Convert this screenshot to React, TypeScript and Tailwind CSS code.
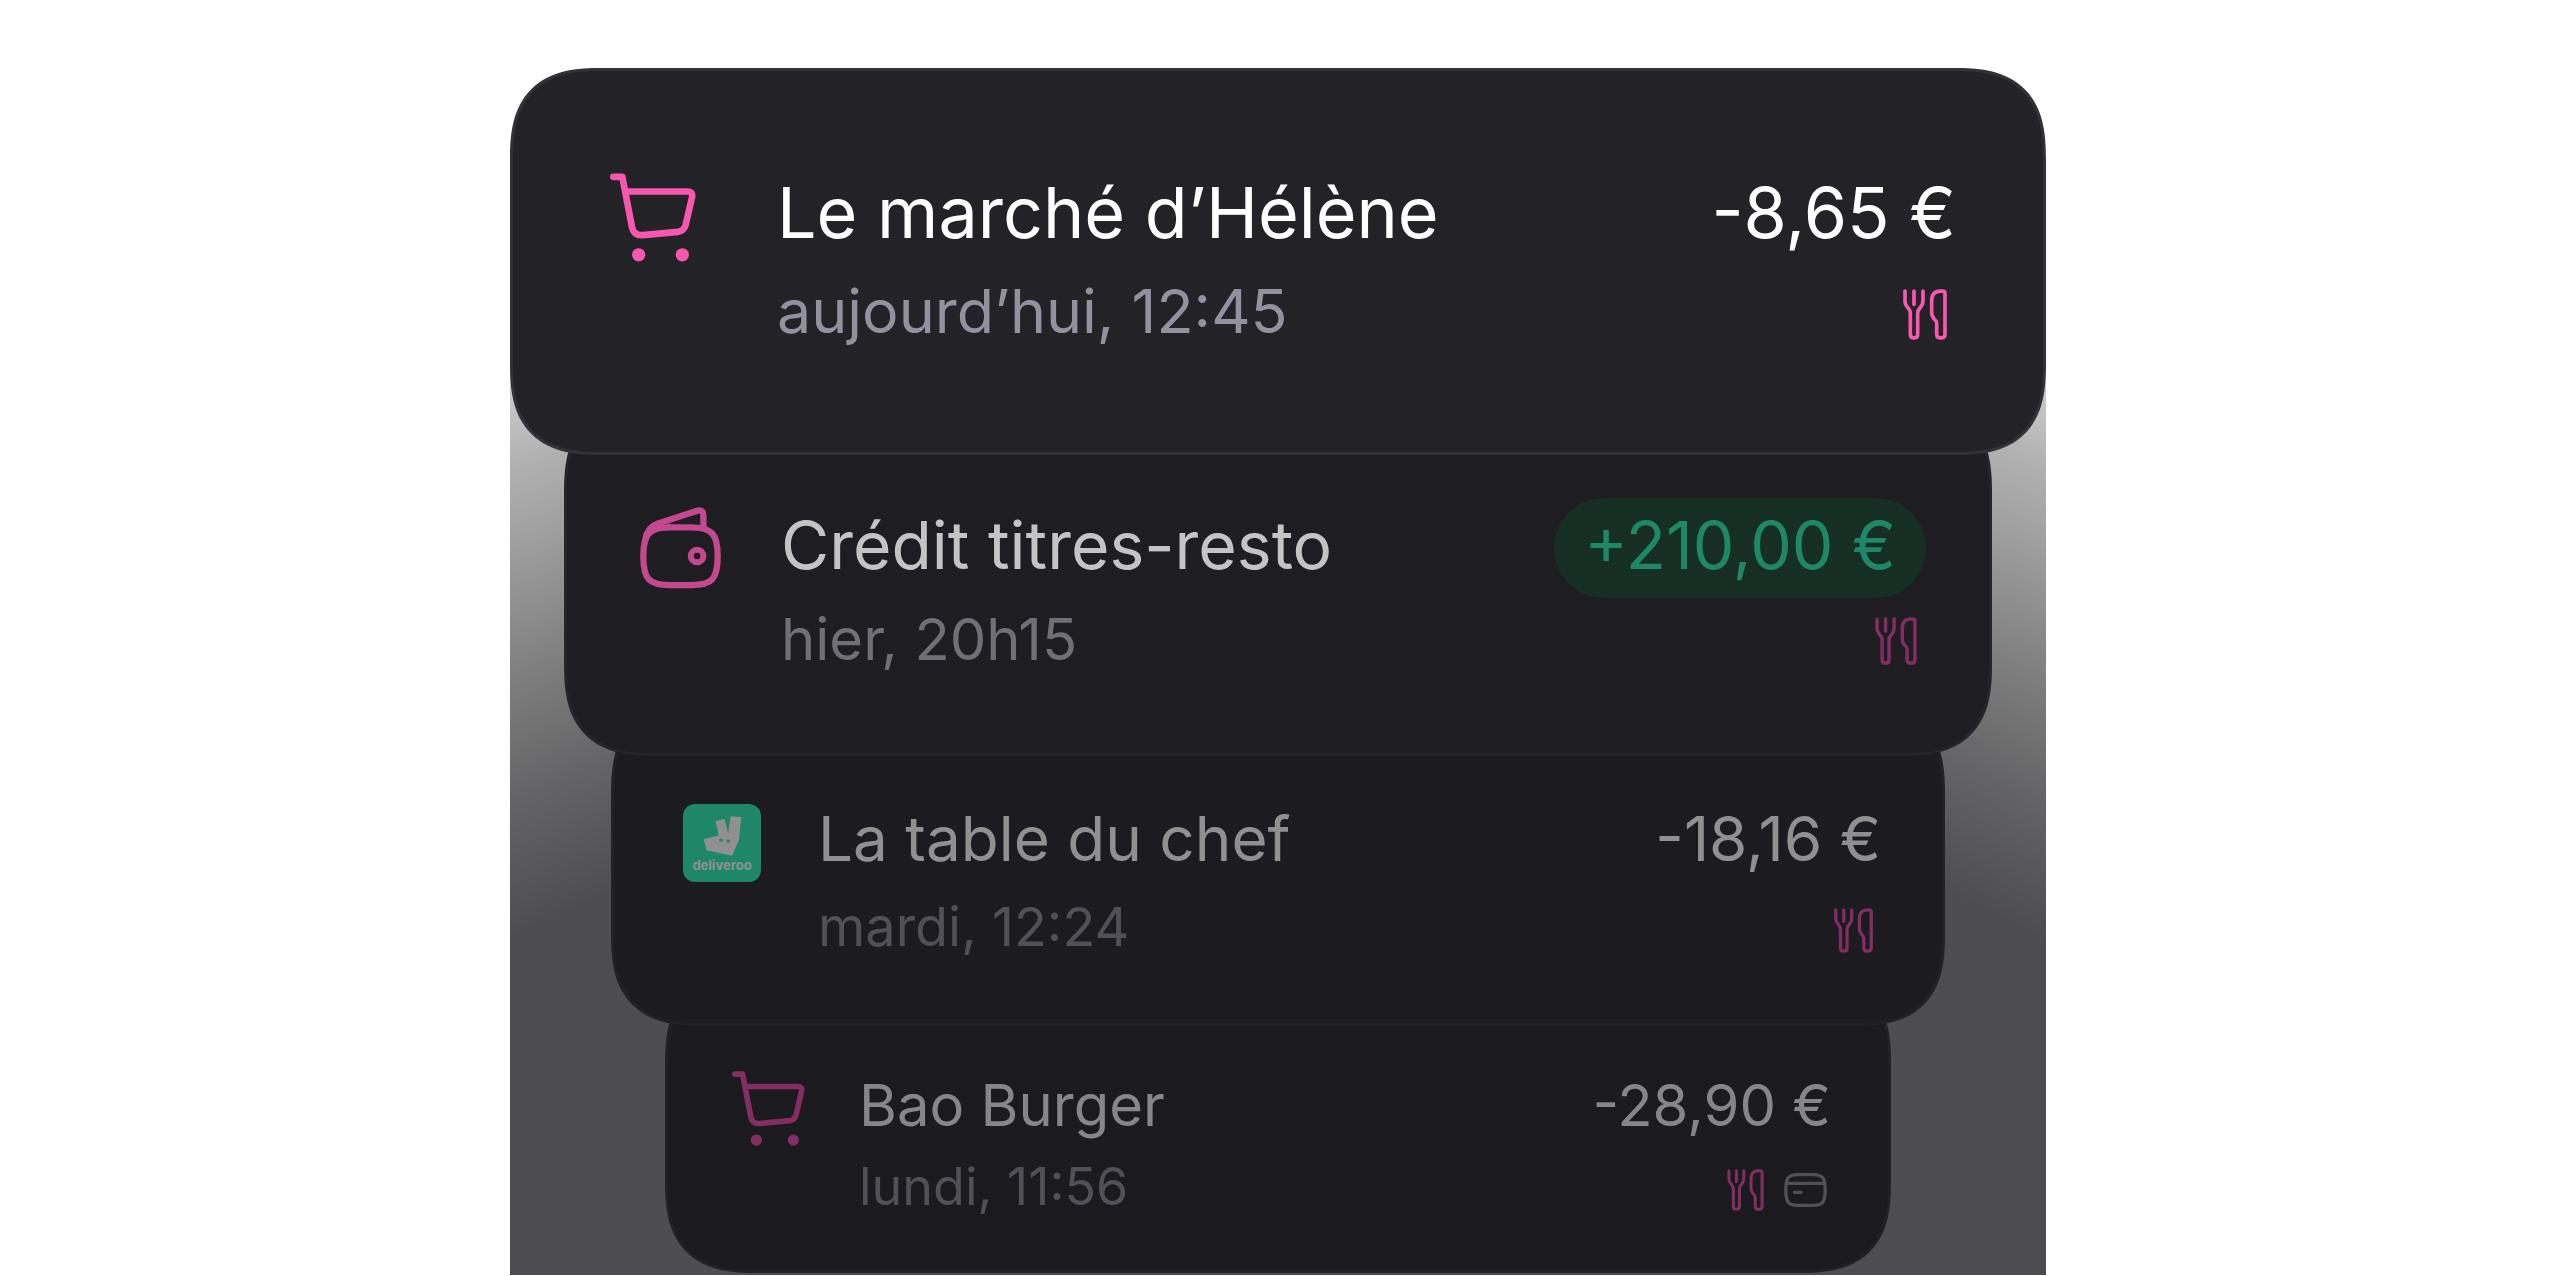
import type { ReactNode } from "react";
import clsx from "clsx";

function CartIcon({ className }: { className?: string }) {
  return (
    <svg viewBox="60 70 258 266" fill="none" stroke="currentColor" strokeWidth="20" strokeLinecap="round" strokeLinejoin="round" className={className} aria-hidden="true">
      <path d="M70 81H97L126 232Q131 258 158 256L264 246Q282 243 287 225L306 143Q310 125 292 125H108" />
      <circle cx="146" cy="315" r="20" fill="currentColor" stroke="none" />
      <circle cx="277" cy="315" r="20" fill="currentColor" stroke="none" />
    </svg>
  );
}

function WalletIcon({ className }: { className?: string }) {
  return (
    <svg viewBox="60 52 244 246" fill="none" stroke="currentColor" strokeWidth="19" strokeLinecap="round" strokeLinejoin="round" className={className} aria-hidden="true">
      <path d="M150 113H215C278 113 294 134 294 200C294 268 278 287 215 287H150C86 287 70 268 70 200C70 134 86 113 150 113Z" />
      <path d="M76 150C80 122 92 109 112 102L235 62Q250 59 251 76V114" />
      <path d="M90 122L150 104V112Z" fill="currentColor" strokeWidth="6" />
      <circle cx="232" cy="199" r="19" strokeWidth="18" />
    </svg>
  );
}

function CutleryIcon({ className }: { className?: string }) {
  return (
    <svg viewBox="69 57 132 152" fill="none" stroke="currentColor" strokeWidth="11" strokeLinecap="round" strokeLinejoin="round" className={className} aria-hidden="true">
      <path d="M75 63V92Q75 104 84 113Q91 120 91 130V192Q91 203 102 203Q113 203 113 192V130Q113 120 120 113Q129 104 129 92V63" />
      <path d="M102 63V102" />
      <path d="M195 70V192Q195 203 183 203Q170 203 170 192V158Q170 152 163 147Q155 139 155 128V92Q155 63 182 63H188Q195 63 195 70Z" />
    </svg>
  );
}

function CardIcon({ className }: { className?: string }) {
  return (
    <svg viewBox="253 69 128 102" fill="none" stroke="currentColor" strokeWidth="10" strokeLinecap="round" className={className} aria-hidden="true">
      <path d="M294 74H340C369 74 376 84 376 120C376 156 369 166 340 166H294C265 166 258 156 258 120C258 84 265 74 294 74Z" />
      <path d="M260 100H374M284 127H304" />
    </svg>
  );
}

function DeliverooLogo() {
  return (
    <div className="flex size-[78px] flex-col items-center rounded-xl bg-[#1e8767] pt-3 text-[#909090]">
      <svg viewBox="98 77 117 123" className="h-10 w-[39px]" fill="currentColor" aria-hidden="true">
        <path d="M135 92L163 86L174 130L181 78L214 80L207 151L186 199L107 182L99 148L145 137Z" />
        <ellipse cx="152" cy="151" rx="6" ry="5" fill="#1e8767" />
        <ellipse cx="174" cy="154" rx="6" ry="5" fill="#1e8767" />
      </svg>
      <span className="text-[13px] leading-[18px] font-bold">deliveroo</span>
    </div>
  );
}

type TransactionProps = {
  className: string;
  icon: ReactNode;
  title: string;
  date: string;
  amount: ReactNode;
  tags: ReactNode;
  textClassName: string;
  titleClassName: string;
  dateClassName: string;
  tagsClassName: string;
};

function Transaction(props: TransactionProps) {
  return (
    <li className={clsx("relative flex items-start rounded-[92px] border-[3px] [corner-shape:superellipse(1.4)]", props.className)}>
      {props.icon}
      <div className={clsx("min-w-0 flex-1 whitespace-nowrap", props.textClassName)}>
        <h2 className={props.titleClassName}>{props.title}</h2>
        <p className={props.dateClassName}>{props.date}</p>
      </div>
      <div className="flex shrink-0 flex-col items-end whitespace-nowrap">
        <p className={props.titleClassName}>{props.amount}</p>
        <div className={clsx("flex items-center", props.tagsClassName)}>{props.tags}</div>
      </div>
    </li>
  );
}

export default function App() {
  return (
    <main className="min-h-screen bg-white pt-[68px] font-[Inter,'Liberation_Sans',sans-serif]">
      <ul className="mx-auto w-full max-w-[1536px] rounded-t-[120px] bg-[radial-gradient(circle_at_50%_2432px,#4d4d4f_1738px,#646466_1865px,#828282_1990px,#a2a2a2_2110px,#b0b0b0_2170px,#c8c8c8_2240px)] pb-0.5">
        <Transaction
          className="z-40 border-[#323137] bg-[#232227] pt-[93px] pr-[87px] pb-[92px] pl-[97px]"
          icon={<CartIcon className="mt-[9px] h-[89px] w-[86px] text-[#f857b0]" />}
          title="Le marché d’Hélène"
          date="aujourd’hui, 12:45"
          amount="-8,65 €"
          tags={<CutleryIcon className="h-[51px] w-11 text-[#f857b0]" />}
          textClassName="ml-[81px]"
          titleClassName="text-[70px] leading-[98px] text-white"
          dateClassName="text-[61px] leading-[98px] text-[#9390a0]"
          tagsClassName="mt-[27px] mr-[9px]"
        />
        <Transaction
          className="z-30 mx-[54px] -mt-[54px] border-[#252428] bg-[#1e1d21] pt-[94px] pr-[63px] pb-[67px] pl-[73px]"
          icon={<WalletIcon className="mt-[9px] h-[82px] w-[81px] text-[#c3488d]" />}
          title="Crédit titres-resto"
          date="hier, 20h15"
          amount={<span className="block h-[100px] rounded-full bg-[#172e25] px-[30px] text-[#1e8767]">+210,00 €</span>}
          tags={<CutleryIcon className="h-12 w-[42px] text-[#832e62]" />}
          textClassName="ml-[60px]"
          titleClassName="text-[66px] leading-[94px] text-[#c4c4c4]"
          dateClassName="text-[58px] leading-[94px] text-[#706f78]"
          tagsClassName="mt-[19px] mr-[9px]"
        />
        <Transaction
          className="z-20 mx-[101px] -mt-[54px] border-[#222125] bg-[#1c1b1f] pt-[90px] pr-[61px] pb-[52px] pl-[69px]"
          icon={<div className="mt-[9px]"><DeliverooLogo /></div>}
          title="La table du chef"
          date="mardi, 12:24"
          amount="-18,16 €"
          tags={<CutleryIcon className="h-[45px] w-[39px] text-[#832e62]" />}
          textClassName="ml-[57px]"
          titleClassName="text-[62px] leading-[88px] text-[#909090]"
          dateClassName="text-[54px] leading-[88px] text-[#515058]"
          tagsClassName="mt-[25px] mr-2"
        />
        <Transaction
          className="z-10 mx-[155px] -mt-[54px] border-[#212024] bg-[#1b1a1e] pt-[89px] pr-[57px] pb-[42px] pl-16"
          icon={<CartIcon className="mt-[7px] h-[75px] w-[73px] text-[#832e62]" />}
          title="Bao Burger"
          date="lundi, 11:56"
          amount="-28,90 €"
          tags={
            <>
              <CutleryIcon className="h-[42px] w-[37px] text-[#832e62]" />
              <CardIcon className="h-[34px] w-[43px] text-[#515058]" />
            </>
          }
          textClassName="ml-[54px]"
          titleClassName="text-[58px] leading-[82px] text-[#868688]"
          dateClassName="text-[52px] leading-[82px] text-[#515058]"
          tagsClassName="mt-[23px] mr-1 gap-5"
        />
      </ul>
    </main>
  );
}
